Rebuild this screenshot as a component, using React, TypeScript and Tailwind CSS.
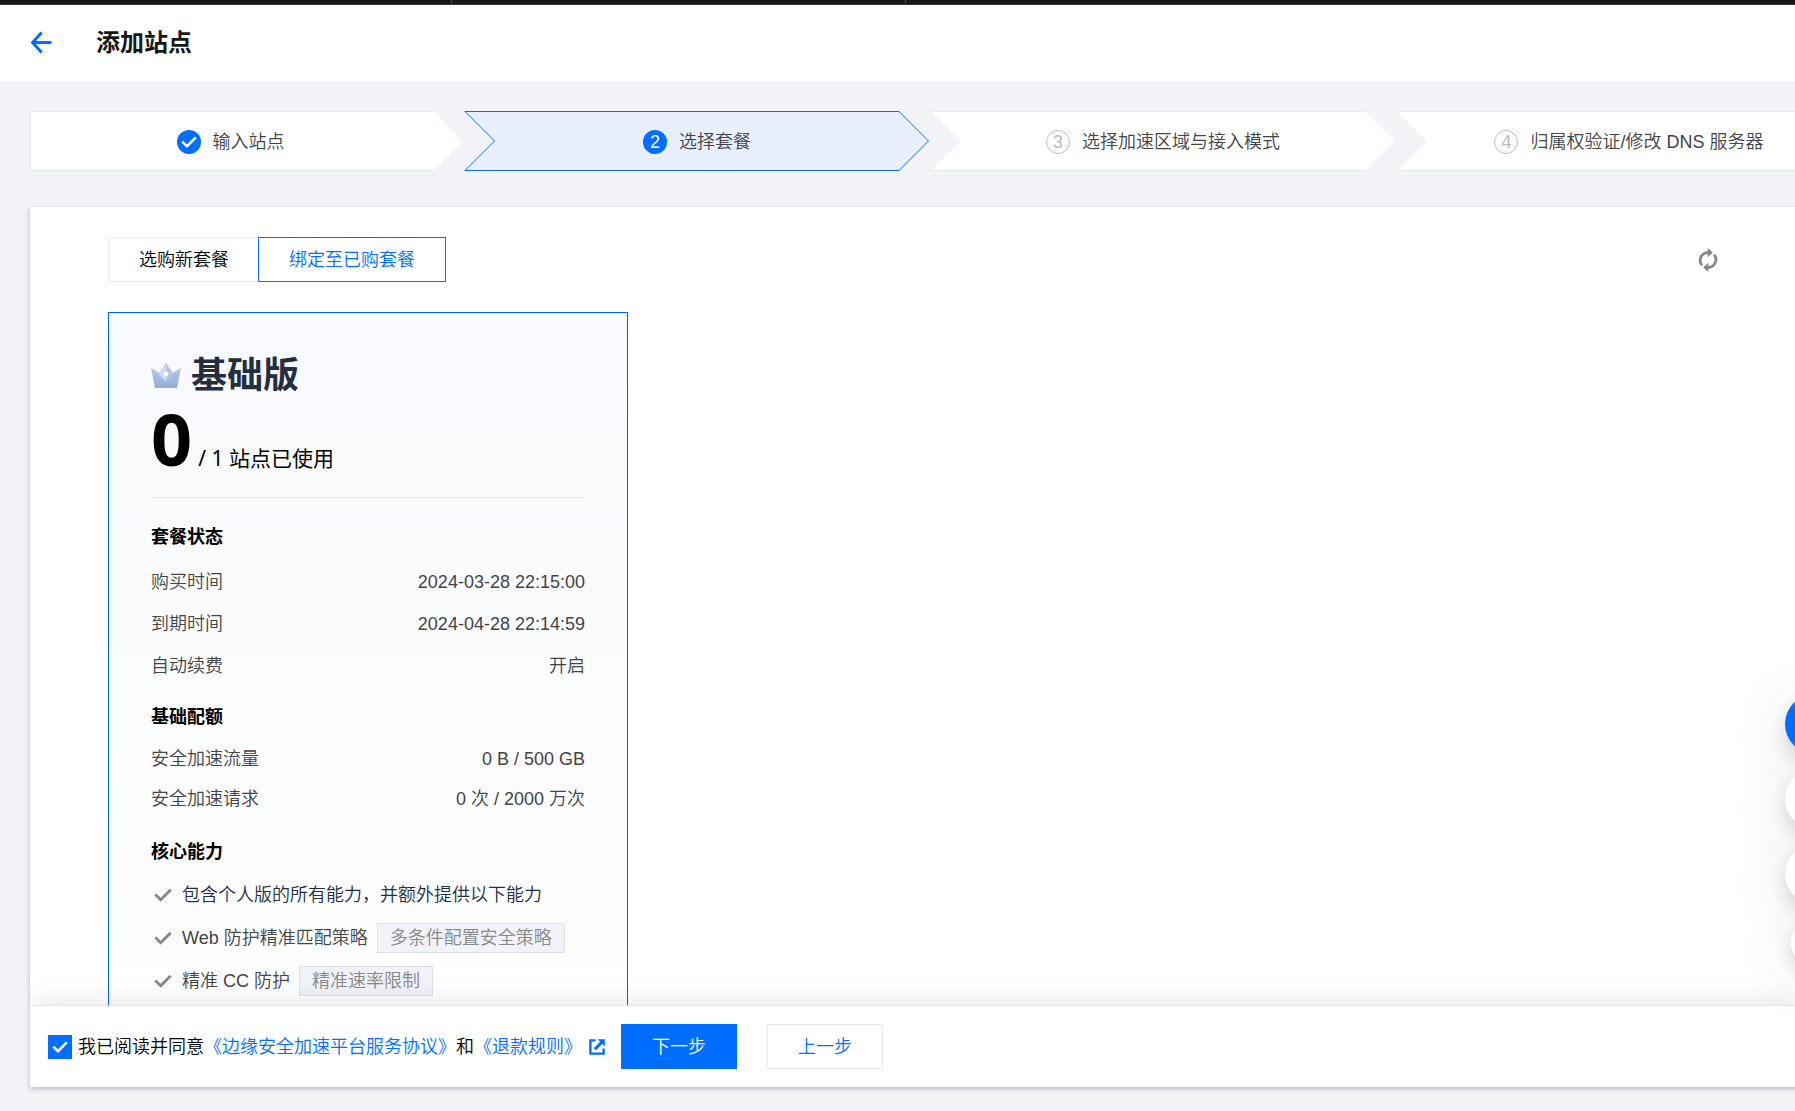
import React, { useState } from 'react';

const steps = [
    { id: 1, label: '输入站点' },
    { id: 2, label: '选择套餐' },
    { id: 3, label: '选择加速区域与接入模式' },
    { id: 4, label: '归属权验证/修改 DNS 服务器' },
];

const currentStep = 2;

const statusRows = [
    { label: '购买时间', value: '2024-03-28 22:15:00' },
    { label: '到期时间', value: '2024-04-28 22:14:59' },
    { label: '自动续费', value: '开启' },
];

const quotaRows = [
    { label: '安全加速流量', value: '0 B / 500 GB' },
    { label: '安全加速请求', value: '0 次 / 2000 万次' },
];

const features = [
    { text: '包含个人版的所有能力，并额外提供以下能力', tag: '', color: 'text-[#242e40]' },
    { text: 'Web 防护精准匹配策略', tag: '多条件配置安全策略', color: 'text-[#444]' },
    { text: '精准 CC 防护', tag: '精准速率限制', color: 'text-[#444]' },
];

const CheckIcon = ({ className }: { className: string }) => (
    <svg viewBox="0 0 16 16" className={className} fill="none" stroke="currentColor" strokeWidth="2.6" aria-hidden="true">
        <path d="M1.2 7.6 L6 12.2 L14.8 3.4" />
    </svg>
);

const BackIcon = () => (
    <svg viewBox="0 0 22 24" className="h-6 w-[22px]" fill="none" stroke="#006eff" strokeWidth="3" aria-hidden="true">
        <path d="M21.5 11.5 H3 M11.6 1.6 L2.6 11.5 L11.6 21.4" />
    </svg>
);

const RefreshIcon = () => (
    <svg viewBox="0 0 20 24" className="h-6 w-5" fill="none" stroke="#888" strokeWidth="2.8" aria-hidden="true">
        <path d="M4 17.4 A7.8 7.8 0 0 1 10.5 4.6 M16 6.6 A7.8 7.8 0 0 1 9.5 19.4" />
        <path d="M9.6 0 L14.8 4.6 L9.6 9.2 Z M10.4 14.8 L5.2 19.4 L10.4 24 Z" fill="#888" stroke="none" />
    </svg>
);

const ExternalIcon = () => (
    <svg viewBox="0 0 16 16" className="h-4 w-4" fill="none" stroke="#006eff" strokeWidth="2.4" aria-hidden="true">
        <path d="M6.5 1.4 H1.4 V14.6 H14.6 V9.5" />
        <path d="M12.6 3.4 L5.8 10.2" strokeWidth="3" />
        <path d="M8.6 0.2 H15.8 V7.4 Z" fill="#006eff" stroke="none" />
    </svg>
);

const CrownIcon = () => (
    <svg viewBox="0 0 30 27" className="h-[27px] w-[30px]" aria-hidden="true">
        <defs>
            <linearGradient id="crown" x1="0" y1="0" x2="0" y2="1">
                <stop offset="0" stopColor="#c3d1ec" />
                <stop offset="1" stopColor="#93abd6" />
            </linearGradient>
        </defs>
        <path d="M0 5 L8.5 10 L15 0 L21.5 10 L30 5 L26 25 H4 Z" fill="url(#crown)" />
        <path d="M15 0 L22.5 11 L15 18.5 L7.5 11 Z" fill="#b3c4e6" />
        <path d="M15 0 L7.5 11 L15 18.5 Z" fill="#d0dbf1" />
        <path d="M15 8 L18 11 L15 14 L12 11 Z" fill="#fff" />
    </svg>
);

const StepLabel = ({ id, label }: { id: number; label: string }) => (
    <div className="flex items-center gap-3 pt-0.5 text-lg whitespace-nowrap text-[#444]">
        {id < currentStep && (
            <span className="flex h-6 w-6 items-center justify-center rounded-full bg-[#006eff] text-white">
                <CheckIcon className="h-4 w-4" />
            </span>
        )}
        {id === currentStep && (
            <span className="flex h-6 w-6 items-center justify-center rounded-full bg-[#006eff] leading-6 text-white">{id}</span>
        )}
        {id > currentStep && (
            <span className="flex h-6 w-6 items-center justify-center rounded-full border border-[#bbb] leading-6 text-[#bbb]">{id}</span>
        )}
        <span>{label}</span>
    </div>
);

const Step = ({ id, label }: { id: number; label: string }) => {
    if (id === currentStep) {
        return (
            <li
                aria-current="step"
                className="bg-[#006eff] py-px pr-px pl-[2px] [clip-path:polygon(0_0,calc(100%-30px)_0,100%_50%,calc(100%-30px)_100%,0_100%,30px_50%)]"
            >
                <div className="flex h-full items-center justify-center bg-[#e8efff] [clip-path:polygon(0_0,calc(100%-29px)_0,100%_50%,calc(100%-29px)_100%,0_100%,29px_50%)]">
                    <StepLabel id={id} label={label} />
                </div>
            </li>
        );
    }
    if (id === 1) {
        return (
            <li className="flex items-center justify-center border-y border-l border-[#e7eaef] bg-white pr-8 [clip-path:polygon(0_0,calc(100%-29px)_0,100%_50%,calc(100%-29px)_100%,0_100%)]">
                <StepLabel id={id} label={label} />
            </li>
        );
    }
    return (
        <li className="flex items-center justify-center border-y border-[#e7eaef] bg-white [clip-path:polygon(0_0,calc(100%-30px)_0,100%_50%,calc(100%-30px)_100%,0_100%,30px_50%)]">
            <StepLabel id={id} label={label} />
        </li>
    );
};

const Row = ({ label, value }: { label: string; value: string }) => (
    <div className="flex justify-between">
        <dt>{label}</dt>
        <dd>{value}</dd>
    </div>
);

const PlanCard = () => (
    <section className="w-[520px] border border-[#0060ff] bg-linear-to-b from-[#f7f9fc] to-white px-[42px] pt-[38px] pb-10">
        <div className="flex items-center gap-2.5">
            <CrownIcon />
            <h2 className="text-4xl leading-[50px] font-bold text-[#242e40]">基础版</h2>
        </div>
        <p className="flex items-baseline gap-1.5 font-['Noto_Sans','Noto_Sans_CJK_SC',sans-serif] text-black">
            <span className="text-7xl leading-[74px] font-bold">0</span>
            <span className="text-[21px] leading-8 font-normal">/ 1 站点已使用</span>
        </p>
        <hr className="mt-[22px] border-[#e3e6ed]" />

        <h3 className="mt-[25px] text-lg leading-7 font-bold text-black">套餐状态</h3>
        <dl className="mt-[17px] flex flex-col gap-3.5 text-lg leading-7 text-[#444]">
            {statusRows.map((row) => (
                <Row key={row.label} {...row} />
            ))}
        </dl>

        <h3 className="mt-[23px] text-lg leading-7 font-bold text-black">基础配额</h3>
        <dl className="mt-3.5 flex flex-col gap-3 text-lg leading-7 text-[#444]">
            {quotaRows.map((row) => (
                <Row key={row.label} {...row} />
            ))}
        </dl>

        <h3 className="mt-[25px] text-lg leading-7 font-bold text-black">核心能力</h3>
        <ul className="mt-3.5 flex flex-col gap-[13px] text-lg">
            {features.map((item) => (
                <li key={item.text} className={`flex h-[30px] items-center whitespace-nowrap ${item.color}`}>
                    <CheckIcon className="mr-2.5 ml-[3px] h-[18px] w-[18px] text-[#888]" />
                    <span>{item.text}</span>
                    {item.tag && (
                        <span className="ml-[9px] border border-[#dcdfe8] bg-[#f2f3f8] px-3 leading-7 text-[#888]">{item.tag}</span>
                    )}
                </li>
            ))}
        </ul>
    </section>
);

const floatShadow = 'shadow-[0_8px_16px_rgba(54,58,80,0.16),0_10px_60px_rgba(54,58,80,0.14)]';

const App = () => {
    const [agreed, setAgreed] = useState(true);

    return (
        <div className="relative flex h-screen flex-col overflow-hidden bg-[#f2f4f8] font-['Liberation_Sans','Noto_Sans_CJK_SC',sans-serif] text-lg font-[350] text-black">
            <div className="flex h-[5px] shrink-0 border-b border-[#333] bg-[#181818]">
                <div className="w-[452px] border-r border-[#444]" />
                <div className="w-[454px] border-r border-[#444]" />
            </div>

            <header className="flex h-[76px] shrink-0 items-center gap-11 bg-white px-[30px]">
                <button type="button" aria-label="返回">
                    <BackIcon />
                </button>
                <h1 className="text-2xl font-bold text-[#181818]">添加站点</h1>
            </header>

            <ol className="mt-[30px] -mr-[66px] ml-[30px] grid h-[60px] shrink-0 grid-cols-[432fr_465fr_464fr_464fr] gap-x-[2px]">
                {steps.map((step) => (
                    <Step key={step.id} {...step} />
                ))}
            </ol>

            <main className="mt-9 -mr-2 mb-6 ml-[30px] flex min-h-0 flex-1 flex-col bg-white shadow-[0_2px_5px_rgba(54,58,80,0.32)]">
                <div className="min-h-0 flex-1 overflow-hidden px-[78px] pt-[30px]">
                    <div className="flex items-center justify-between pr-[7px]">
                        <div className="flex">
                            <button type="button" className="h-[45px] border border-r-0 border-[#e7eaef] px-[30px]">
                                选购新套餐
                            </button>
                            <button type="button" className="-ml-px h-[45px] border border-[#006eff] px-[30px] text-[#006eff]">
                                绑定至已购套餐
                            </button>
                        </div>
                        <button type="button" aria-label="刷新">
                            <RefreshIcon />
                        </button>
                    </div>
                    <div className="mt-[30px]">
                        <PlanCard />
                    </div>
                </div>

                <footer className="relative flex h-[82px] shrink-0 items-center border-t border-[#e4e7ec] bg-white pl-[18px] shadow-[0_-6px_24px_rgba(0,0,0,0.08)] [clip-path:inset(-40px_0_0_0)]">
                    <label htmlFor="agree" className="flex items-center gap-1.5">
                        <span className="grid">
                            <input
                                id="agree"
                                type="checkbox"
                                checked={agreed}
                                onChange={(e) => setAgreed(e.target.checked)}
                                className="col-start-1 row-start-1 h-6 w-6 appearance-none border border-[#006eff] checked:bg-[#006eff]"
                            />
                            {agreed && <CheckIcon className="pointer-events-none col-start-1 row-start-1 m-1 h-4 w-4 text-white" />}
                        </span>
                        <span>我已阅读并同意</span>
                    </label>
                    <a href="#agreement" className="text-[#006eff]">《边缘安全加速平台服务协议》</a>
                    <span>和</span>
                    <a href="#refund" className="flex items-center gap-[7px] text-[#006eff]">
                        《退款规则》
                        <ExternalIcon />
                    </a>
                    <button type="button" className="ml-4 h-[45px] border border-[#006eff] bg-[#006eff] px-[30px] text-white">
                        下一步
                    </button>
                    <button type="button" className="ml-[30px] h-[45px] border border-[#e7eaef] bg-white px-[30px] text-[#006eff]">
                        上一步
                    </button>
                </footer>
            </main>

            {/* floating help buttons, half hidden behind the right edge */}
            <div className="absolute -right-[50px] bottom-36 flex flex-col items-center gap-[15px]">
                <button type="button" aria-label="咨询" className={`h-[60px] w-[60px] rounded-full bg-[#006eff] ${floatShadow}`} />
                <button type="button" aria-label="电话" className={`h-[60px] w-[60px] rounded-full bg-white ${floatShadow}`} />
                <button type="button" aria-label="反馈" className={`h-[60px] w-[60px] rounded-full bg-white ${floatShadow}`} />
                <button type="button" aria-label="收起" className={`h-12 w-12 rounded-full bg-white ${floatShadow}`} />
            </div>
        </div>
    );
};

export default App;
